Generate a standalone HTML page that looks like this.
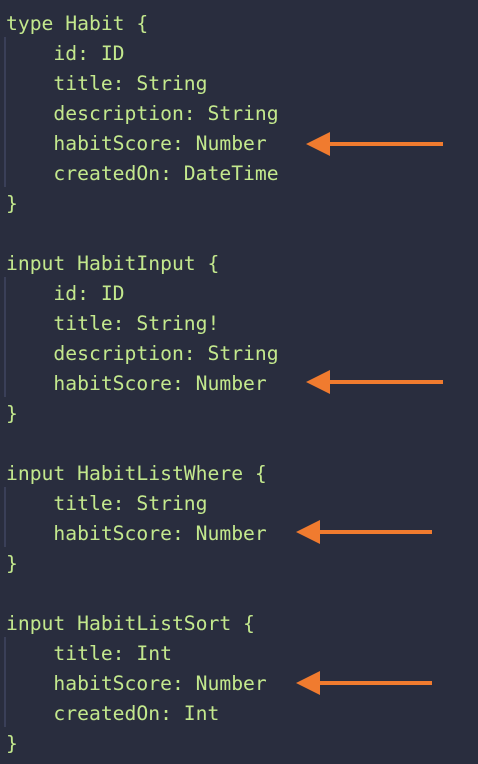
<!DOCTYPE html>
<html><head><meta charset="utf-8"><style>
html,body{margin:0;padding:0;background:#292d3e;width:478px;height:764px;overflow:hidden;}
.code{position:absolute;left:6px;top:9px;font-family:"DejaVu Sans Mono","Liberation Mono",monospace;font-size:19.7px;line-height:30px;color:#c3e88d;white-space:pre;}
.g{position:absolute;left:4px;width:2px;background:#3a3f58;}
svg{position:absolute;left:0;top:0;}
</style></head><body>
<div class="g" style="top:37px;height:150px"></div>
<div class="g" style="top:277px;height:120px"></div>
<div class="g" style="top:487px;height:60px"></div>
<div class="g" style="top:637px;height:90px"></div>
<div class="code">type Habit {
    id: ID
    title: String
    description: String
    habitScore: Number
    createdOn: DateTime
}

input HabitInput {
    id: ID
    title: String!
    description: String
    habitScore: Number
}

input HabitListWhere {
    title: String
    habitScore: Number
}

input HabitListSort {
    title: Int
    habitScore: Number
    createdOn: Int
}</div>
<svg width="478" height="764">
<g fill="#f07b2f">
<rect x="328" y="142" width="115" height="4"/><polygon points="306,144 330,132 330,156"/>
<rect x="328" y="380" width="115" height="4"/><polygon points="306,382 330,370 330,394"/>
<rect x="318" y="530" width="114" height="4"/><polygon points="296,532 320,520 320,544"/>
<rect x="318" y="681" width="114" height="4"/><polygon points="296,683 320,671 320,695"/>
</g></svg>
</body></html>
